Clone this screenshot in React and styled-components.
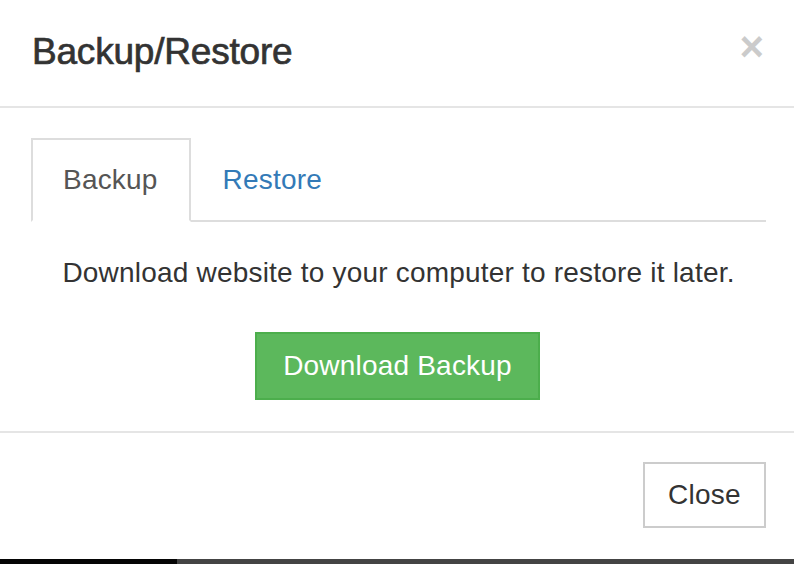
import styled, { createGlobalStyle } from "styled-components";
import { useState } from "react";

export default function App() {
  const [tab, setTab] = useState("backup")

  return (
    <>
      <GlobalStyle />
      <Modal>
        <Header>
          <Title>Backup/Restore</Title>
          <CloseX aria-label="Close">×</CloseX>
        </Header>
        <Body>
          <Tabs>
            <Tab active={tab === "backup"} onClick={() => setTab("backup")}>Backup</Tab>
            <Tab active={tab === "restore"} onClick={() => setTab("restore")}>Restore</Tab>
          </Tabs>
          <Pane>
            <Text>Download website to your computer to restore it later.</Text>
            <GreenButton>Download Backup</GreenButton>
          </Pane>
        </Body>
        <Footer>
          <PlainButton>Close</PlainButton>
        </Footer>
      </Modal>
      <Taskbar>
        <TaskLeft />
        <TaskRight />
      </Taskbar>
    </>
  );
}

const GlobalStyle = createGlobalStyle`
html, body {
  margin: 0;
  padding: 0;
  background: #fff;
}
body {
  font-family: "Liberation Sans", Arial, sans-serif;
  color: #333;
}
* { box-sizing: border-box; }
`

const Modal = styled.div`
width: 794px;
height: 559px;
background: #fff;
display: flex;
flex-direction: column;
`

const Header = styled.div`
display: flex;
align-items: flex-start;
justify-content: space-between;
padding: 26px 30px 0 32px;
height: 108px;
border-bottom: 2px solid #e5e5e5;
`

const Title = styled.h4`
margin: 0;
font-size: 37px;
font-weight: 400;
line-height: 52px;
color: #333;
letter-spacing: -0.2px;
-webkit-text-stroke: 0.7px #333;
`

const CloseX = styled.button`
border: 0;
background: none;
padding: 0;
margin-top: 1px;
font-family: "Liberation Sans", Arial, sans-serif;
font-size: 42px;
font-weight: 700;
line-height: 40px;
color: #000;
opacity: 0.2;
cursor: pointer;
`

const Body = styled.div`
padding: 30px 28px 0 31px;
height: 325px;
border-bottom: 2px solid #e5e5e5;
`

const Tabs = styled.div`
display: flex;
border-bottom: 2px solid #ddd;
height: 84px;
`

const Tab = styled.div`
font-size: 28px;
line-height: 40px;
padding: 20px 31px 20px 30px;
margin-bottom: -2px;
border: 2px solid ${p => (p.active ? "#ddd" : "transparent")};
border-bottom-color: ${p => (p.active ? "#fff" : "transparent")};
background: ${p => (p.active ? "#fff" : "transparent")};
color: ${p => (p.active ? "#555" : "#337ab7")};
letter-spacing: 0.2px;
cursor: pointer;
`

const Pane = styled.div`
display: flex;
flex-direction: column;
align-items: center;
padding-top: 31px;
`

const Text = styled.p`
margin: 0 0 39px;
font-size: 28px;
line-height: 40px;
letter-spacing: 0.2px;
color: #333;
`

const GreenButton = styled.button`
font-family: "Liberation Sans", Arial, sans-serif;
font-size: 28px;
line-height: 40px;
letter-spacing: 0.2px;
padding: 12px 26px;
margin-right: 2px;
color: #fff;
background: #5cb85c;
border: 2px solid #4cae4c;
border-radius: 0;
cursor: pointer;
`

const Footer = styled.div`
display: flex;
justify-content: flex-end;
padding: 29px 28px 0 30px;
flex: 1;
`

const PlainButton = styled.button`
font-family: "Liberation Sans", Arial, sans-serif;
font-size: 28px;
line-height: 40px;
letter-spacing: 0.3px;
height: 66px;
padding: 0 23px;
color: #333;
background: #fff;
border: 2px solid #ccc;
border-radius: 0;
cursor: pointer;
`

const Taskbar = styled.div`
display: flex;
height: 5px;
`

const TaskLeft = styled.div`
width: 177px;
background: #050505;
`

const TaskRight = styled.div`
flex: 1;
background: #444;
`
